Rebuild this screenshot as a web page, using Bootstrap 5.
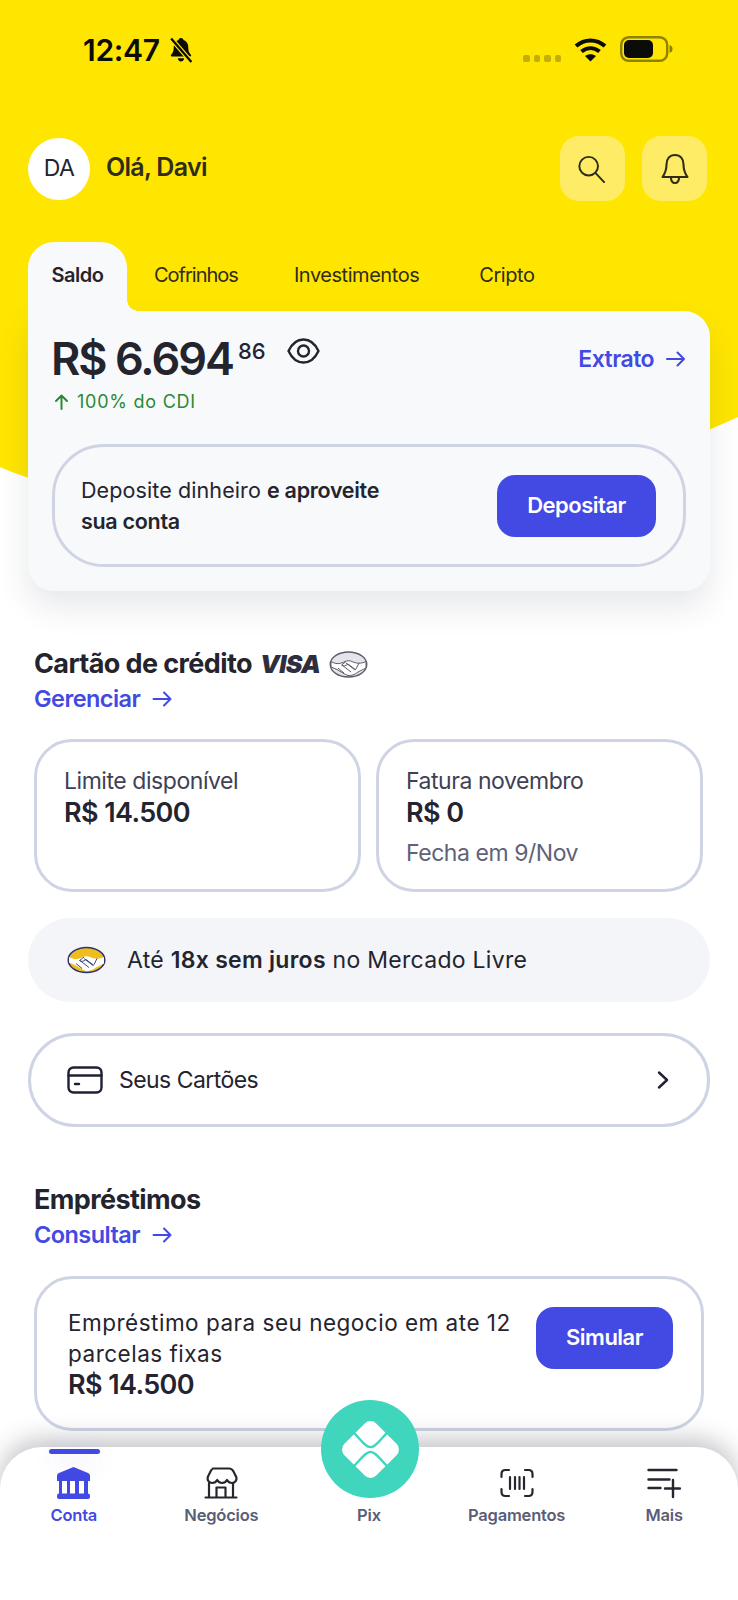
<!DOCTYPE html>
<html lang="pt-BR">
<head>
    <title>Conta</title>
    <meta name="viewport" content="width=device-width, initial-scale=1.0">
    <link href="https://cdn.jsdelivr.net/npm/bootstrap@5.3.0/dist/css/bootstrap.min.css" rel="stylesheet">
    <style>
        body {
            font-family: Inter, "Liberation Sans", sans-serif;
            color: #24242f;
            background: #fff;
        }

        .app-page {
            width: 738px;
            height: 1600px;
            overflow: hidden;
        }

        .hero-bg {
            position: absolute;
            top: 0;
            left: 0;
            z-index: 0;
        }

        .page-flow {
            z-index: 1;
        }

        .status-row {
            height: 100px;
            padding: 36px 65px 0 83px;
        }

        .status-time {
            font-size: 30px;
            font-weight: 600;
            line-height: 28px;
            color: #0b0b08;
            letter-spacing: -0.3px;
        }

        .signal-dot {
            width: 6.5px;
            height: 7px;
            border-radius: 2px;
            background: #c4ae0c;
        }

        .status-gap {
            margin-right: 13px;
        }

        .top-row {
            margin-top: 36px;
            padding: 0 31px 0 28px;
            height: 65px;
        }

        .avatar-circle {
            width: 62px;
            height: 62px;
            font-size: 23px;
            letter-spacing: -0.5px;
        }

        .hello-name {
            font-size: 25px;
            font-weight: 600;
            letter-spacing: -0.7px;
            margin: 0 0 2px 16px;
            color: #2f2c1c;
        }

        .top-btns {
            gap: 17px;
        }

        .top-btn {
            width: 65px;
            height: 65px;
            border-radius: 19px;
            background: #ffec66;
        }

        .tab-row {
            margin: 41px 28px 0;
            height: 69px;
            font-size: 20px;
            letter-spacing: -0.45px;
            color: #2f2c1c;
        }

        .tab-on {
            width: 99px;
            height: 69px;
            padding-top: 18px;
            background: #f8f9fb;
            border-radius: 26px 26px 0 0;
            font-weight: 600;
            color: #24242f;
        }

        .tab-on::after {
            content: "";
            position: absolute;
            left: 99px;
            bottom: 0;
            width: 11px;
            height: 11px;
            background: radial-gradient(circle at 100% 0, transparent 10.5px, #f8f9fb 11px);
        }

        .tab-off {
            padding-top: 18px;
        }

        .tab-gap-a {
            margin-left: 27px;
            letter-spacing: -1px;
        }

        .tab-gap-b {
            margin-left: 56px;
        }

        .tab-gap-c {
            margin-left: 60px;
        }

        .saldo-box {
            margin: 0 28px;
            height: 280px;
            padding: 26px 24px 0;
            background: #f8f9fb;
            border-radius: 0 26px 26px 26px;
            box-shadow: 0 16px 32px rgba(40, 44, 70, 0.11);
        }

        .saldo-value {
            font-size: 45px;
            font-weight: 600;
            line-height: 44px;
            letter-spacing: -2px;
            margin-left: -1px;
        }

        .saldo-cents {
            font-size: 22px;
            font-weight: 500;
            line-height: 22px;
            letter-spacing: -0.2px;
            margin: 3px 0 0 5px;
        }

        .eye-icon {
            margin: 1px 0 0 22px;
        }

        .blue-link {
            color: #4349e3;
            font-size: 23px;
            font-weight: 600;
            letter-spacing: -0.55px;
            text-decoration: none;
        }

        .cdi-line {
            color: #2a8a34;
            font-size: 18px;
            line-height: 22px;
            margin: 10px 0 0 2px;
            letter-spacing: 0.75px;
        }

        .outline-box {
            border: 3px solid #cfd4e5;
            background: transparent;
        }

        .deposit-box {
            height: 123px;
            margin-top: 31px;
            border-radius: 52px;
            padding: 0 27px 0 26px;
            font-size: 21.5px;
            line-height: 31px;
            letter-spacing: 0.1px;
        }

        .deposit-box b {
            font-weight: 600;
            letter-spacing: -0.3px;
        }

        .btn-violet {
            background: #434ae3;
            border: 0;
            color: #fff;
            height: 62px;
            border-radius: 18px;
            font-size: 22px;
            font-weight: 600;
            letter-spacing: -0.5px;
        }

        .btn-deposit {
            width: 159px;
        }

        .section-title {
            font-size: 27px;
            font-weight: 700;
            line-height: 32px;
            letter-spacing: -0.6px;
        }

        .visa-mark {
            font-size: 25px;
            font-weight: 900;
            font-style: italic;
            letter-spacing: -0.7px;
            color: #2e2e3e;
            margin-left: 8px;
        }

        .visa-logo {
            margin-left: 9px;
        }

        .section-head {
            margin: 57px 34px 0;
        }

        .section-sub {
            line-height: 28px;
            margin-top: 5px;
            display: inline-flex;
            align-items: center;
            font-size: 23.5px;
        }

        .info-row {
            margin: 26px 34px 0;
            gap: 15px;
        }

        .info-card {
            width: 327px;
            height: 153px;
            border-radius: 38px;
            padding: 23px 27px;
            font-size: 23px;
            line-height: 32px;
            letter-spacing: -0.45px;
            color: #3f4154;
        }

        .info-value {
            font-size: 27px;
            font-weight: 600;
            letter-spacing: -0.6px;
            line-height: 32px;
            color: #24242f;
        }

        .info-note {
            color: #5f6278;
            margin-top: 8px;
        }

        .ml-pill {
            margin: 26px 28px 0;
            height: 84px;
            border-radius: 42px;
            background: #f3f5f9;
            padding-left: 39px;
            font-size: 23px;
            letter-spacing: 0.28px;
        }

        .ml-logo {
            margin-right: 21px;
        }

        .ml-pill b {
            font-weight: 600;
        }

        .cards-pill {
            margin: 31px 28px 0;
            height: 94px;
            border-radius: 47px;
            padding: 0 38px 0 36px;
            font-size: 23px;
            letter-spacing: -0.55px;
        }

        .card-loan {
            margin: 27px 34px 0;
            height: 155px;
            border-radius: 38px;
            padding: 1px 28px 0 31px;
            font-size: 22.5px;
            line-height: 31px;
            letter-spacing: 0.5px;
        }

        .btn-simulate {
            width: 137px;
            margin-top: -33px;
        }

        .tab-bar {
            margin-top: auto;
            height: 153px;
            background: #fff;
            border-radius: 42px 42px 0 0;
            box-shadow: 0 -8px 24px rgba(30, 30, 50, 0.26);
            z-index: 2;
        }

        .tab-item {
            width: 20%;
            padding-top: 20px;
            font-size: 16.5px;
            font-weight: 600;
            line-height: 24px;
            letter-spacing: -0.2px;
            color: #5a5d78;
        }

        .tab-item svg {
            height: 32px;
            margin-bottom: 4px;
        }

        .tab-spacer {
            height: 32px;
            margin-bottom: 4px;
        }

        .tab-active {
            color: #4349e3;
        }

        .tab-line {
            position: absolute;
            top: 2px;
            left: 49px;
            width: 51px;
            height: 5px;
            border-radius: 3px;
            background: #434ae3;
            box-shadow: 0 8px 26px rgba(67, 74, 227, 0.16);
        }

        .pix-btn {
            position: absolute;
            top: -47px;
            left: 321px;
            width: 98px;
            height: 98px;
            border-radius: 50%;
            background: #3fd6bd;
        }
    </style>
</head>
<body>
    <div class="app-page position-relative">
        <svg class="hero-bg" width="738" height="520" viewBox="0 0 738 520">
            <path d="M0 0H738V417C640 462 500 512 330 512C180 512 70 498 0 467Z" fill="#ffe600"/>
        </svg>

        <div class="page-flow position-relative d-flex flex-column h-100">
            <div class="status-row d-flex justify-content-between align-items-start">
                <div class="d-flex align-items-center gap-2">
                    <span class="status-time">12:47</span>
                    <svg width="26" height="26" viewBox="0 0 24 25">
                        <path d="M12 1c1.400 0 2.200.9 2.400 2 3 .9 4.600 3.500 4.600 7 0 3.500.8 5.200 2.500 7 .6.700.2 1.700-.8 1.700H3.300c-1 0-1.400-1-.8-1.700C4.200 15.200 5 13.500 5 10c0-3.500 1.600-6.100 4.600-7 .2-1.100 1-2 2.400-2zM9 20.500h6c0 1.900-1.300 3-3 3s-3-1.100-3-3z" fill="#0b0b08"/>
                        <path d="M2.500 1.500 22 24" stroke="#ffe600" stroke-width="4.500"/>
                        <path d="M2.500 1.500 22 24" stroke="#0b0b08" stroke-width="2.200"/>
                    </svg>
                </div>
                <div class="d-flex align-items-center">
                    <div class="d-flex gap-1 align-self-end status-gap" aria-hidden="true">
                        <span class="signal-dot"></span><span class="signal-dot"></span><span class="signal-dot"></span><span class="signal-dot"></span>
                    </div>
                    <svg class="status-gap" width="33" height="25" viewBox="0 0 33 25" fill="none" stroke="#0b0b08" stroke-width="4">
                        <path d="M2 9c8.500-7.500 20.500-7.500 29 0"/>
                        <path d="M7.500 14.500c5.500-4.500 12.500-4.500 18 0"/>
                        <path d="M16.500 24.500l-5.500-5.500c3.300-2.500 7.700-2.500 11 0z" fill="#0b0b08" stroke="none"/>
                    </svg>
                    <svg width="53" height="26" viewBox="0 0 53 26">
                        <rect x="1.200" y="1.200" width="46" height="23.600" rx="7.500" fill="none" stroke="#8f8100" stroke-width="2.400"/>
                        <rect x="4" y="4" width="29" height="18" rx="5" fill="#0b0b08"/>
                        <path d="M49.500 9c2.300.6 3 2.300 3 4s-.7 3.400-3 4z" fill="#8f8100"/>
                    </svg>
                </div>
            </div>

            <div class="top-row d-flex align-items-center">
                <div class="avatar-circle rounded-circle bg-white d-flex align-items-center justify-content-center">DA</div>
                <span class="hello-name">Olá, Davi</span>
                <div class="top-btns ms-auto d-flex">
                    <div class="top-btn d-flex align-items-center justify-content-center">
                        <svg class="me-1" width="28" height="28" viewBox="0 0 30 30" fill="none" stroke="#2f2c1c" stroke-width="2.100" stroke-linecap="round">
                            <circle cx="12.500" cy="12" r="10"/>
                            <path d="M20 19.500l9 9.500"/>
                        </svg>
                    </div>
                    <div class="top-btn d-flex align-items-center justify-content-center">
                        <svg width="28" height="32" viewBox="0 0 28 32" fill="none" stroke="#2f2c1c" stroke-width="2.100" stroke-linejoin="round">
                            <path d="M14 2c-5.500 0-8.500 4-8.500 9.500 0 6-1.500 9-4 12.500h25c-2.500-3.500-4-6.500-4-12.500C22.500 6 19.500 2 14 2z"/>
                            <path d="M10 24.500c0 3.500 1.800 5.500 4 5.500s4-2 4-5.500"/>
                        </svg>
                    </div>
                </div>
            </div>

            <div class="tab-row d-flex">
                <div class="tab-on position-relative text-center">Saldo</div>
                <div class="tab-off tab-gap-a">Cofrinhos</div>
                <div class="tab-off tab-gap-b">Investimentos</div>
                <div class="tab-off tab-gap-c">Cripto</div>
            </div>

            <div class="saldo-box">
                <div class="d-flex justify-content-between align-items-center">
                    <div class="d-flex align-items-start">
                        <span class="saldo-value">R$ 6.694</span>
                        <span class="saldo-cents">86</span>
                        <svg class="eye-icon" width="33" height="26" viewBox="0 0 33 26" fill="none" stroke="#24242f" stroke-width="2.400" stroke-linejoin="round">
                            <path d="M1.500 13C5 5.500 10 1.500 16.500 1.500S28 5.500 31.500 13C28 20.500 23 24.500 16.500 24.500S5 20.500 1.500 13z"/>
                            <circle cx="16.500" cy="13" r="5.500"/>
                        </svg>
                    </div>
                    <a class="blue-link d-flex align-items-center gap-2" href="#">Extrato
                        <svg class="ms-1" width="20" height="18" viewBox="0 0 20 18" fill="none" stroke="#4349e3" stroke-width="2" stroke-linecap="round" stroke-linejoin="round"><path d="M1 9h17M11.500 2.500 18 9l-6.500 6.500"/></svg>
                    </a>
                </div>
                <div class="cdi-line d-flex align-items-center">
                    <svg class="me-2" width="15" height="16" viewBox="0 0 15 16" fill="none" stroke="#2a8a34" stroke-width="2" stroke-linecap="round" stroke-linejoin="round"><path d="M7.500 15V1.500M2 7l5.500-5.500L13 7"/></svg>
                    100% do CDI
                </div>
                <div class="deposit-box outline-box d-flex align-items-center justify-content-between">
                    <div>Deposite dinheiro <b>e aproveite<br>sua conta</b></div>
                    <button class="btn btn-violet btn-deposit" type="button">Depositar</button>
                </div>
            </div>

            <div class="section-head">
                <div class="section-title d-flex align-items-center">
                    Cartão de crédito
                    <span class="visa-mark">VISA</span>
                    <svg class="visa-logo" width="39" height="27" viewBox="0 0 39 27">
                        <ellipse cx="19.500" cy="13.500" rx="18.300" ry="12.500" fill="#e4e4ea" stroke="#5d5d68" stroke-width="1.300"/>
                        <path d="M2 10.500C8 14 12 12.500 16 10.500c2-1 5-1 7 0 4 2 9 2.500 14 0V17c-3 1.500-5 2.500-8 4-3 2.500-7 4-10 3.500-3-1-7-3.500-11-6L2 16z" fill="#fff" stroke="#5d5d68" stroke-width="1"/>
                        <path d="M9 17l6 5M13 14l9 7M17 12l9 7M17 10.500l-4.500 3.500c1.500 1.500 4 1 6.500-1l8 6M30 12l-3 6" fill="none" stroke="#5d5d68" stroke-width="1"/>
                    </svg>
                </div>
                <a class="blue-link section-sub gap-2" href="#">Gerenciar
                    <svg class="ms-1" width="21" height="18" viewBox="0 0 20 18" fill="none" stroke="#4349e3" stroke-width="2" stroke-linecap="round" stroke-linejoin="round"><path d="M1 9h17M11.500 2.500 18 9l-6.500 6.500"/></svg>
                </a>
            </div>

            <div class="info-row d-flex">
                <div class="info-card outline-box">
                    <div>Limite disponível</div>
                    <div class="info-value">R$ 14.500</div>
                </div>
                <div class="info-card outline-box">
                    <div>Fatura novembro</div>
                    <div class="info-value">R$ 0</div>
                    <div class="info-note">Fecha em 9/Nov</div>
                </div>
            </div>

            <div class="ml-pill d-flex align-items-center">
                <svg class="ml-logo" width="39" height="28" viewBox="0 0 39 27">
                    <ellipse cx="19.500" cy="13.500" rx="18.300" ry="12.500" fill="#f0bd1f" stroke="#2c3370" stroke-width="1.500"/>
                    <path d="M2 10.500C8 14 12 12.500 16 10.500c2-1 5-1 7 0 4 2 9 2.500 14 0V17c-3 1.500-5 2.500-8 4-3 2.500-7 4-10 3.500-3-1-7-3.500-11-6L2 16z" fill="#fff"/>
                    <path d="M9 17l6 5M13 14l9 7M17 12l9 7M17 10.500l-4.500 3.500c1.500 1.500 4 1 6.500-1l8 6M30 12l-3 6" fill="none" stroke="#2c3370" stroke-width=".9"/>
                </svg>
                <span>Até <b>18x sem juros</b> no Mercado Livre</span>
            </div>

            <div class="cards-pill outline-box d-flex align-items-center">
                <svg class="me-3" width="36" height="28" viewBox="0 0 36 28" fill="none" stroke="#1f2033" stroke-width="2.400" stroke-linecap="round">
                    <rect x="1.500" y="1.500" width="33" height="25" rx="5"/>
                    <path d="M1.500 9.500h33M8 18h4"/>
                </svg>
                <span>Seus Cartões</span>
                <svg class="ms-auto" width="12" height="18" viewBox="0 0 12 18" fill="none" stroke="#1f2033" stroke-width="2.400" stroke-linecap="round" stroke-linejoin="round"><path d="M2 1.500 10 9l-8 7.500"/></svg>
            </div>

            <div class="section-head">
                <div class="section-title">Empréstimos</div>
                <a class="blue-link section-sub gap-2" href="#">Consultar
                    <svg class="ms-1" width="21" height="18" viewBox="0 0 20 18" fill="none" stroke="#4349e3" stroke-width="2" stroke-linecap="round" stroke-linejoin="round"><path d="M1 9h17M11.500 2.500 18 9l-6.500 6.500"/></svg>
                </a>
            </div>

            <div class="card-loan outline-box d-flex align-items-center justify-content-between">
                <div>Empréstimo para seu negocio em ate 12<br>parcelas fixas<div class="info-value">R$ 14.500</div></div>
                <button class="btn btn-violet btn-simulate" type="button">Simular</button>
            </div>

            <nav class="tab-bar position-relative d-flex">
                <span class="tab-line"></span>
                <div class="tab-item tab-active text-center">
                    <svg width="33" height="32" viewBox="0 0 33 32" class="d-block mx-auto" fill="#434ae3">
                        <path d="M16.500 0 31 6c1.300.6 2 1.500 2 3v5H0V9c0-1.500.7-2.400 2-3z"/>
                        <rect x="2" y="14" width="3" height="14"/><rect x="10" y="14" width="3" height="14"/><rect x="18" y="14" width="4" height="14"/><rect x="27" y="14" width="4" height="14"/>
                        <rect x="0" y="26.500" width="33" height="5.500" rx="2"/>
                    </svg>
                    Conta
                </div>
                <div class="tab-item text-center">
                    <svg width="34" height="32" viewBox="0 0 34 32" class="d-block mx-auto" fill="none" stroke="#26262f" stroke-width="2.200" stroke-linecap="round" stroke-linejoin="round">
                        <path d="M9 1.500h16c2 0 3.500 1 4.500 3l2.500 5c1.500 3.500-1 6.500-4 6.500-2.200 0-4-1.200-5-3-1 1.800-2.800 3-5 3s-3.800-1.200-4.800-3c-1 1.800-2.800 3-5 3-3.200 0-5.500-3-4.200-6.500l2.500-5c1-2 2-3 3-3z"/>
                        <path d="M5 16v14.500M29 16v14.500M1.500 30.500h31M12.500 30.500V20.500h9v10"/>
                    </svg>
                    Negócios
                </div>
                <div class="tab-item text-center">
                    <div class="tab-spacer"></div>
                    Pix
                </div>
                <div class="tab-item text-center">
                    <svg width="34" height="32" viewBox="0 0 34 32" class="d-block mx-auto" fill="none" stroke="#26262f" stroke-width="2.200" stroke-linecap="round" stroke-linejoin="round">
                        <path d="M9 3H5.500C3 3 1.500 4.500 1.500 7v3M25 3h3.500c2.500 0 4 1.500 4 4v3M1.500 22v3c0 2.500 1.500 4 4 4H9M32.500 22v3c0 2.500-1.500 4-4 4H25M10 10v12M15 10v12M19.500 10v12M24 10v12"/>
                    </svg>
                    Pagamentos
                </div>
                <div class="tab-item text-center">
                    <svg width="34" height="32" viewBox="0 0 34 32" class="d-block mx-auto" fill="none" stroke="#26262f" stroke-width="2.400" stroke-linecap="round">
                        <path d="M1.500 3h28M1.500 12.500h21M1.500 21h12M26 13v17M18 21.500h15"/>
                    </svg>
                    Mais
                </div>
                <div class="pix-btn d-flex align-items-center justify-content-center">
                    <svg width="57" height="57" viewBox="0 0 170 170">
                        <rect x="18" y="18" width="134" height="134" rx="24" fill="#fff" transform="rotate(45 85 85)"/>
                        <path d="M25 25C55 52 68 78 85 78C102 78 115 52 145 25" fill="none" stroke="#3fd6bd" stroke-width="7"/>
                        <path d="M25 145C55 118 68 92 85 92C102 92 115 118 145 145" fill="none" stroke="#3fd6bd" stroke-width="7"/>
                    </svg>
                </div>
            </nav>
        </div>
    </div>
    <script src="https://cdn.jsdelivr.net/npm/bootstrap@5.3.0/dist/js/bootstrap.bundle.min.js"></script>
</body>
</html>
